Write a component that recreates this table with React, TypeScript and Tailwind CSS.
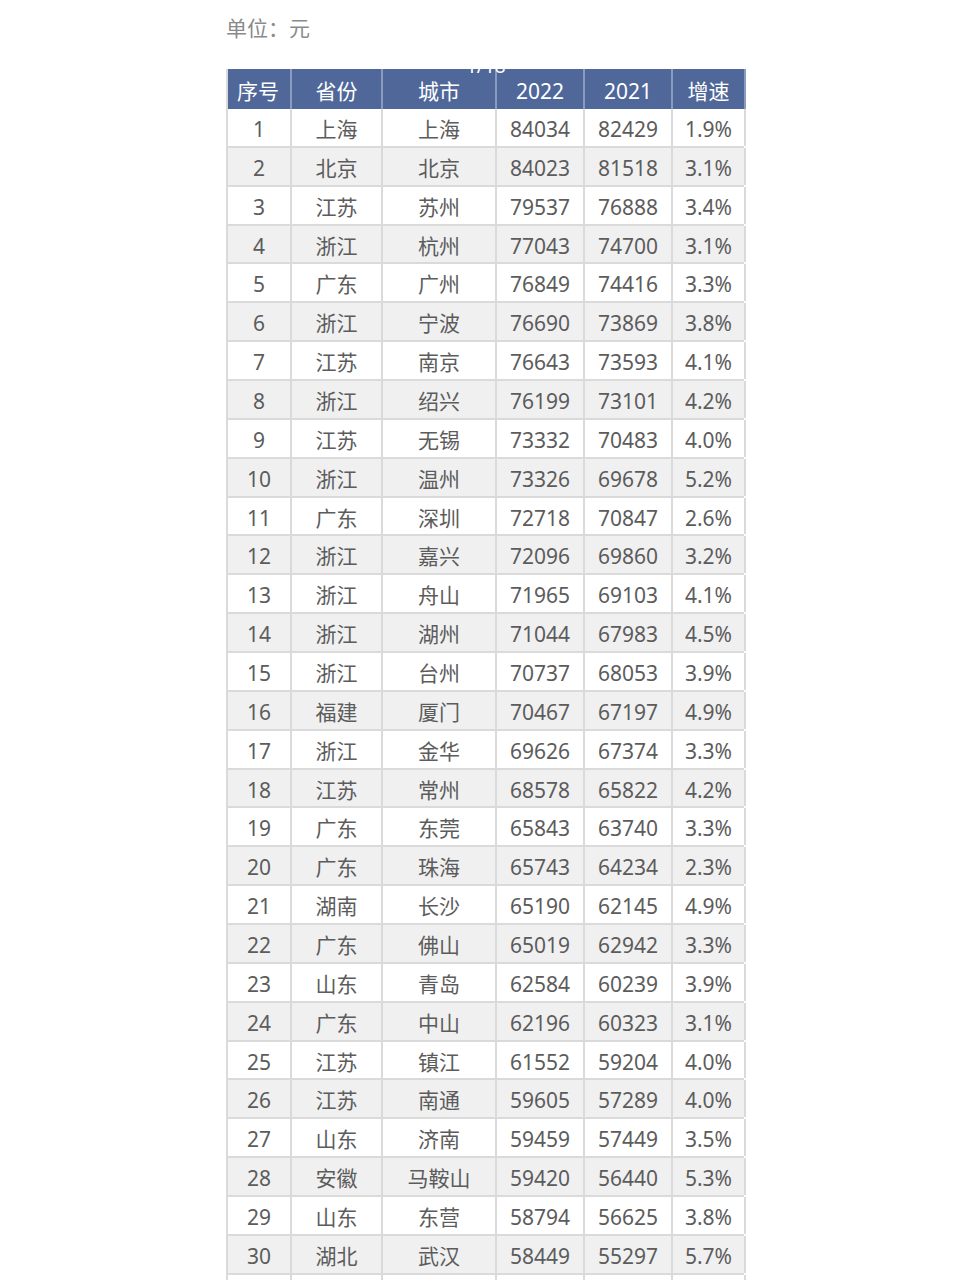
import React from "react";

const rows: [string, string, string, string, string, string][] = [
  ["1", "上海", "上海", "84034", "82429", "1.9%"],
  ["2", "北京", "北京", "84023", "81518", "3.1%"],
  ["3", "江苏", "苏州", "79537", "76888", "3.4%"],
  ["4", "浙江", "杭州", "77043", "74700", "3.1%"],
  ["5", "广东", "广州", "76849", "74416", "3.3%"],
  ["6", "浙江", "宁波", "76690", "73869", "3.8%"],
  ["7", "江苏", "南京", "76643", "73593", "4.1%"],
  ["8", "浙江", "绍兴", "76199", "73101", "4.2%"],
  ["9", "江苏", "无锡", "73332", "70483", "4.0%"],
  ["10", "浙江", "温州", "73326", "69678", "5.2%"],
  ["11", "广东", "深圳", "72718", "70847", "2.6%"],
  ["12", "浙江", "嘉兴", "72096", "69860", "3.2%"],
  ["13", "浙江", "舟山", "71965", "69103", "4.1%"],
  ["14", "浙江", "湖州", "71044", "67983", "4.5%"],
  ["15", "浙江", "台州", "70737", "68053", "3.9%"],
  ["16", "福建", "厦门", "70467", "67197", "4.9%"],
  ["17", "浙江", "金华", "69626", "67374", "3.3%"],
  ["18", "江苏", "常州", "68578", "65822", "4.2%"],
  ["19", "广东", "东莞", "65843", "63740", "3.3%"],
  ["20", "广东", "珠海", "65743", "64234", "2.3%"],
  ["21", "湖南", "长沙", "65190", "62145", "4.9%"],
  ["22", "广东", "佛山", "65019", "62942", "3.3%"],
  ["23", "山东", "青岛", "62584", "60239", "3.9%"],
  ["24", "广东", "中山", "62196", "60323", "3.1%"],
  ["25", "江苏", "镇江", "61552", "59204", "4.0%"],
  ["26", "江苏", "南通", "59605", "57289", "4.0%"],
  ["27", "山东", "济南", "59459", "57449", "3.5%"],
  ["28", "安徽", "马鞍山", "59420", "56440", "5.3%"],
  ["29", "山东", "东营", "58794", "56625", "3.8%"],
  ["30", "湖北", "武汉", "58449", "55297", "5.7%"],
  ["", "", "", "", "", ""],
];

const widths = ["w-[64px]", "w-[91px]", "w-[114px]", "w-[88px]", "w-[88px]", "w-[73px]"];
const headers = ["序号", "省份", "城市", "2022", "2021", "增速"];

export default function App() {
  return (
    <div
      className="relative h-[1280px] w-[960px] overflow-hidden bg-white"
      style={{ fontFamily: '"Noto Sans", "Noto Sans CJK SC", sans-serif' }}
    >
      <div className="pl-[226px] pt-[14px] text-[21px] leading-[28px] text-[#8a8a8a]">单位：元</div>
      <div className="relative ml-[226px] mt-[27px] w-[518px] border-l-2 border-[#dadada]">
        <div className="flex h-[40px] bg-[#50679a] text-[21px] text-white">
          {headers.map((h, i) => (
            <div
              key={i}
              className={`${widths[i]} flex shrink-0 items-center justify-center border-r-2 border-[#8a9bbd] pt-[4px] leading-none ${i === 0 ? "-ml-[2px] w-[66px]" : ""}`}
            >
              {h}
            </div>
          ))}
        </div>
        <div className="pointer-events-none absolute left-[238px] top-[-12px] text-[19px] leading-none text-white">
          1/18
        </div>
        {rows.map((r, ri) => (
          <div
            key={ri}
            className={`flex h-[38.86px] border-b-2 border-[#dadada] text-[21px] text-[#5c5c5c] ${ri % 2 === 1 ? "bg-[#f0f0f1]" : "bg-white"}`}
          >
            {r.map((c, ci) => (
              <div
                key={ci}
                className={`${widths[ci]} flex shrink-0 items-center justify-center border-r-2 border-[#dadada] pt-[4px] leading-none ${ci === 0 ? "w-[62px]" : ""}`}
              >
                {c}
              </div>
            ))}
          </div>
        ))}
      </div>
    </div>
  );
}
